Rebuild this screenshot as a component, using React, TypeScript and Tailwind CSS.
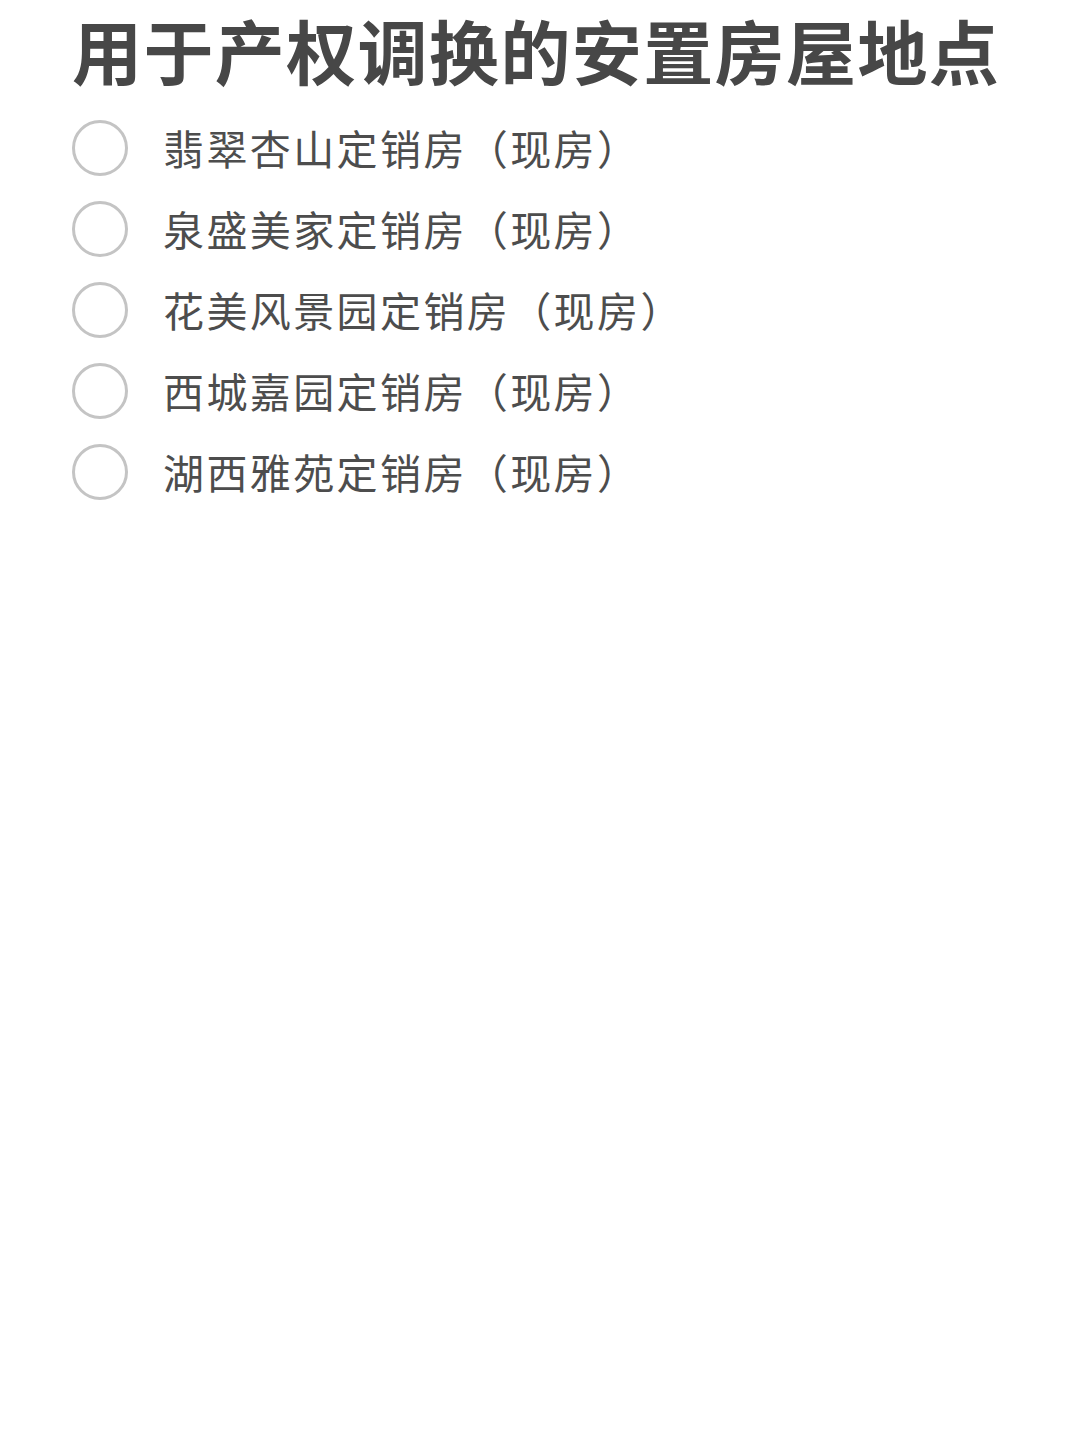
import React from "react";

const items = [
  "翡翠杏山定销房（现房）",
  "泉盛美家定销房（现房）",
  "花美风景园定销房（现房）",
  "西城嘉园定销房（现房）",
  "湖西雅苑定销房（现房）",
];

export default function App() {
  return (
    <div
      className="w-[1080px] h-[1448px] bg-white text-[#484848]"
      style={{ fontFamily: '"Noto Sans CJK SC", "Noto Sans", sans-serif' }}
    >
      <div className="pl-[72px] pt-[7px]">
        <h1 className="text-[70px] leading-[86px] font-bold tracking-[1.4px] text-[#474747]">
          用于产权调换的安置房屋地点
        </h1>
        <div className="mt-[27px] flex flex-col gap-[25px]">
          {items.map((t) => (
            <div key={t} className="flex items-center h-[56px]">
              <div className="w-[56px] h-[56px] rounded-full border-[3px] border-[#c4c4c4] shrink-0" />
              <span className="ml-[35px] -mt-[3px] text-[41px] leading-[56px] font-normal tracking-[2.4px] text-[#4d4d4d]">{t}</span>
            </div>
          ))}
        </div>
      </div>
    </div>
  );
}
